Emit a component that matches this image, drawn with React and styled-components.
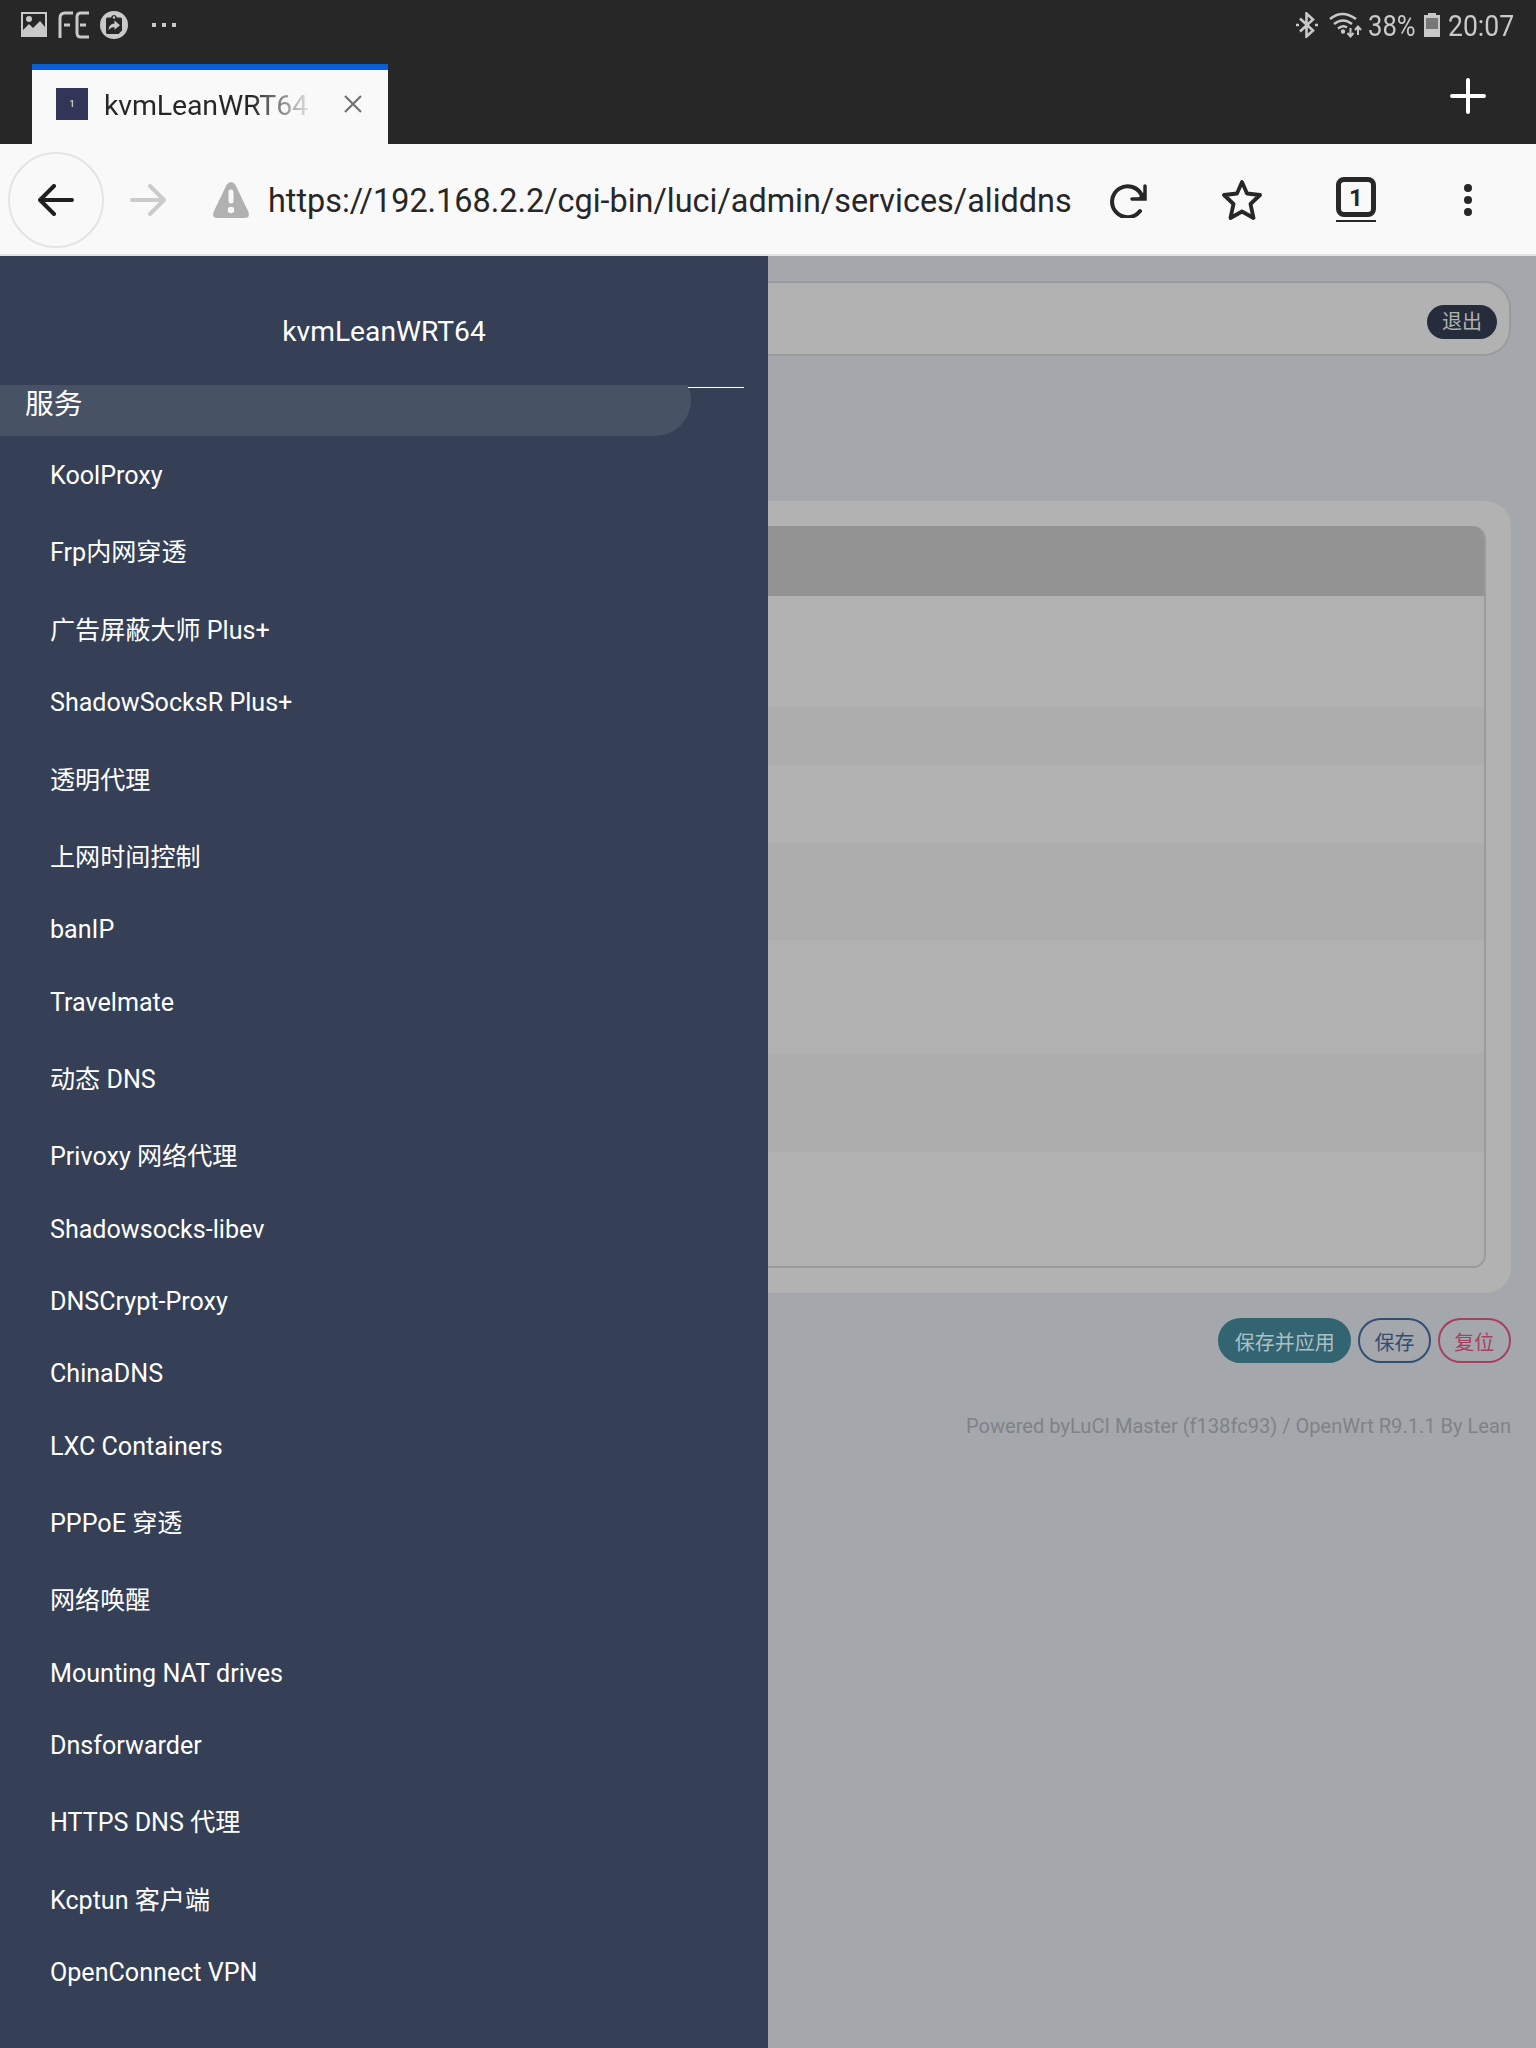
import React from 'react';
import styled, { createGlobalStyle } from 'styled-components';

const GlobalStyle = createGlobalStyle`
  * { box-sizing: border-box; }
  html, body { margin: 0; padding: 0; background: #272727; }
  body { font-family: Roboto, "Noto Sans CJK SC", sans-serif; }
  button { font-family: inherit; padding: 0; margin: 0; border: 0; background: none; }
`;

const Screen = styled.div`
  width: 1536px;
  height: 2048px;
  display: flex;
  flex-direction: column;
  overflow: hidden;
`;

const StatusBar = styled.header`
  height: 50px;
  padding: 0 22px 0 20px;
  display: flex;
  align-items: center;
  justify-content: space-between;
  background: #272727;
  color: #c9c9c9;
`;

const StatusGroup = styled.div`
  display: flex;
  align-items: center;
`;

const Icon = styled.svg`
  display: block;
  flex: none;
  width: ${(p) => p.$w}px;
  height: ${(p) => p.$h}px;
  margin-left: ${(p) => p.$gap || 0}px;
  color: ${(p) => p.$color || 'inherit'};
`;

const StatusText = styled.span`
  flex: none;
  width: ${(p) => p.$w}px;
  margin-left: ${(p) => p.$gap}px;
  padding-top: 1px;
  font-size: 29.5px;
  line-height: 34px;
  white-space: nowrap;
  span {
    display: inline-block;
    transform: scaleX(${(p) => p.$squeeze});
    transform-origin: 0 50%;
  }
`;

const TabStrip = styled.div`
  height: 94px;
  padding: 14px 50px 0 32px;
  display: flex;
  justify-content: space-between;
  background: #272727;
`;

const Tab = styled.div`
  width: 356px;
  height: 80px;
  padding: 0 20px 6px 24px;
  border-top: 6px solid #0a5fd7;
  background: #f9f9fa;
  display: flex;
  align-items: center;
`;

const Favicon = styled.span`
  flex: none;
  width: 32px;
  height: 32px;
  background: #32355a;
  color: #fff;
  font-size: 9px;
  line-height: 32px;
  text-align: center;
`;

const TabTitle = styled.span`
  flex: none;
  width: 216px;
  margin: 3px 0 0 16px;
  white-space: nowrap;
  font-size: 28.5px;
  line-height: 36px;
  letter-spacing: -0.15px;
  background: linear-gradient(90deg, #272727 148px, rgba(39, 39, 39, 0) 212px);
  background-clip: text;
  color: transparent;
`;

const NewTab = styled.button`
  width: 36px;
  height: 64px;
  display: flex;
  align-items: center;
`;

const Toolbar = styled.div`
  height: 112px;
  padding: 2px 64px 0 8px;
  border-bottom: 2px solid #e2e2e2;
  display: flex;
  align-items: center;
  background: #f9f9fa;
  color: #272727;
`;

const BackButton = styled.button`
  width: 96px;
  height: 96px;
  border: 2px solid #e4e4e4;
  border-radius: 50%;
  display: flex;
  align-items: center;
  justify-content: center;
  color: #202020;
`;

const Address = styled.div`
  width: 826px;
  margin: 2px 0 0 19px;
  font-size: 32.4px;
  line-height: 40px;
  white-space: nowrap;
`;

const TabCount = styled.div`
  width: 40px;
  height: 45px;
  margin: 0 0 1px 74px;
  border-bottom: 2px solid #272727;
`;

const TabCountBox = styled.div`
  width: 40px;
  height: 40px;
  border: 5px solid #272727;
  border-radius: 8px;
  text-align: center;
  font-size: 24px;
  font-weight: 700;
  line-height: 32px;
`;

const Viewport = styled.div`
  flex: 1;
  min-height: 0;
  display: flex;
  background: #a4a8ad;
`;

const Drawer = styled.aside`
  width: 768px;
  background: #353f55;
  color: #fff;
  display: flex;
  flex-direction: column;
`;

const Brand = styled.div`
  height: 129px;
  padding-top: 58px;
  text-align: center;
  font-size: 28.2px;
  line-height: 36px;
`;

const MenuScroll = styled.nav`
  flex: 1;
  min-height: 0;
  overflow: hidden;
`;

const SectionRow = styled.div`
  height: 72px;
  margin-top: -21px;
  display: flex;
`;

const Section = styled.div`
  width: 691px;
  height: 72px;
  margin-right: -3px;
  padding-left: 25px;
  border-radius: 0 36px 36px 0;
  background: #475265;
  font-size: 28.8px;
  line-height: 80px;
`;

const Rule = styled.div`
  width: 56px;
  height: 1px;
  margin-top: 23px;
  background: #fff;
`;

const MenuList = styled.ul`
  margin: 0;
  padding: 3.5px 0 0;
  list-style: none;
`;

const MenuItem = styled.li`
  height: ${(p) => (p.$cjk ? 77.4 : 72.3)}px;
  padding-left: 50px;
  display: flex;
  align-items: center;
  font-size: 25.1px;
  white-space: nowrap;
`;

const Page = styled.main`
  flex: 1;
  padding: 25px 25px 0 0;
  display: flex;
  flex-direction: column;
`;

const TopBar = styled.div`
  height: 75px;
  padding: 6px 12px 0 0;
  border: 2px solid #999b9d;
  border-left: 0;
  border-radius: 0 27px 27px 0;
  background: #b2b2b2;
  display: flex;
  align-items: center;
  justify-content: flex-end;
`;

const Logout = styled.button`
  width: 70px;
  height: 34px;
  border-radius: 17px;
  background: #252c3b;
  color: #b2b2b2;
  font-size: 20px;
  line-height: 34px;
`;

const Card = styled.section`
  height: 792px;
  margin-top: 145px;
  padding: 25px 25px 25px 0;
  border-radius: 0 26px 26px 0;
  background: #b2b2b2;
`;

const Table = styled.div`
  height: 742px;
  border: 2px solid #9b9b9b;
  border-width: 0 2px 2px 0;
  border-radius: 0 13px 13px 0;
  overflow: hidden;
  display: flex;
  flex-direction: column;
`;

const TableHead = styled.div`
  flex: none;
  height: 70px;
  margin-right: -2px;
  background: #939393;
`;

const TableRow = styled.div`
  flex: none;
  height: ${(p) => p.$h}px;
  background: ${(p) => (p.$alt ? '#adadad' : '#b1b1b1')};
`;

const Actions = styled.div`
  margin-top: 24.5px;
  display: flex;
  justify-content: flex-end;
  gap: 6.5px;
`;

const Action = styled.button`
  width: ${(p) => (p.$wide ? 133.5 : 73.3)}px;
  height: 45.5px;
  padding-top: 3px;
  border: 2px solid ${(p) => p.$color};
  border-radius: 23px;
  background: ${(p) => (p.$filled ? p.$color : 'transparent')};
  color: ${(p) => (p.$filled ? '#aebfc4' : p.$color)};
  font-size: 20px;
  line-height: 40px;
  white-space: nowrap;
`;

const Footer = styled.footer`
  margin-top: 50px;
  text-align: right;
  color: #7f8286;
  font-size: 20.08px;
  line-height: 26px;
  white-space: nowrap;
`;

const services = [
  'KoolProxy', 'Frp内网穿透', '广告屏蔽大师 Plus+', 'ShadowSocksR Plus+', '透明代理',
  '上网时间控制', 'banIP', 'Travelmate', '动态 DNS', 'Privoxy 网络代理', 'Shadowsocks-libev',
  'DNSCrypt-Proxy', 'ChinaDNS', 'LXC Containers', 'PPPoE 穿透', '网络唤醒',
  'Mounting NAT drives', 'Dnsforwarder', 'HTTPS DNS 代理', 'Kcptun 客户端', 'OpenConnect VPN',
];

const rowHeights = [111, 58, 78, 97, 114, 98, 114];

const hasCjk = (text) => /[\u4e00-\u9fff]/.test(text);

export default function App() {
  return (
    <Screen>
      <GlobalStyle />
      <StatusBar>
        <StatusGroup>
          <Icon $w={28} $h={28} viewBox="0 0 28 28">
            <path fill="currentColor" fillRule="evenodd" d="M1 1h26v25H1zM3 3v16l6-6 4 4 7-7 5 6V3z" />
            <circle cx="9" cy="8" r="3" fill="currentColor" />
          </Icon>
          <Icon $w={32} $h={28} $gap={10} viewBox="0 0 32 28" fill="none" stroke="currentColor" strokeWidth="3">
            <path d="M2 27V7Q2 2 7 2h8M6 14h6M31 2h-8q-4 0-4 4v16q0 4 4 4h8M22 14h6" />
          </Icon>
          <Icon $w={28} $h={28} $gap={10} viewBox="0 0 28 28">
            <circle cx="14" cy="14" r="14" fill="currentColor" />
            <path fill="#272727" d="M7.500 6.500H11Q11.500 4 14 4t3 2.500h3.500Q22 6.500 22 8v11.500L18.500 23h-11Q6 23 6 21.500V8Q6 6.500 7.500 6.500z" />
            <circle cx="14" cy="6.500" r="1.200" fill="currentColor" />
            <path fill="currentColor" d="M8.500 19q.3-6 6-6.500V9.500l5.500 4.700-5.500 4.600V16q-3.500 0-6 3z" />
          </Icon>
          <Icon $w={26} $h={6} $gap={23} viewBox="0 0 26 6" fill="currentColor">
            <rect x="1" y="1" width="4" height="4" /><rect x="11" y="1" width="4" height="4" /><rect x="21" y="1" width="4" height="4" />
          </Icon>
        </StatusGroup>
        <StatusGroup>
          <Icon $w={24} $h={26} viewBox="0 0 24 26" fill="none" stroke="currentColor" strokeWidth="2.6">
            <path d="M5 6.500l13 12-6.500 6V1.500l6.500 6-13 12" />
            <path d="M1 13h3M20 13h3" />
          </Icon>
          <Icon $w={34} $h={26} $gap={9} viewBox="0 0 34 26" fill="none" stroke="currentColor" strokeWidth="2.4">
            <path d="M2 7q12-10 26 0M6 12q9-7 18 0M10 16.500q5-4 9-1" />
            <circle cx="15" cy="19.500" r="1" fill="currentColor" />
            <path strokeWidth="2" d="M22.500 16v8M19.500 21l3 3.500 3-3.500M30 23v-8M27 18l3-3.500 3 3.500" />
          </Icon>
          <StatusText $w={48} $gap={6} $squeeze={0.87}><span>38%</span></StatusText>
          <Icon $w={16} $h={24} $gap={8} viewBox="0 0 16 24">
            <path fill="currentColor" d="M4 0h8v2h4v22H0V2h4z" />
            <rect x="2" y="5" width="12" height="11" fill="#777" />
          </Icon>
          <StatusText $w={66} $gap={8} $squeeze={0.9}><span>20:07</span></StatusText>
        </StatusGroup>
      </StatusBar>

      <TabStrip>
        <Tab>
          <Favicon>1</Favicon>
          <TabTitle>kvmLeanWRT64 -</TabTitle>
          <Icon $w={20} $h={20} $gap={23} $color="#737373" viewBox="0 0 20 20">
            <path d="M2 2l16 16M18 2L2 18" stroke="currentColor" strokeWidth="2.300" />
          </Icon>
        </Tab>
        <NewTab>
          <Icon $w={36} $h={36} viewBox="0 0 36 36">
            <path d="M18 2v32M2 18h32" stroke="#fff" strokeWidth="4" strokeLinecap="round" />
          </Icon>
        </NewTab>
      </TabStrip>

      <Toolbar>
        <BackButton>
          <Icon $w={36} $h={32} viewBox="0 0 36 32" fill="none" stroke="currentColor" strokeWidth="4" strokeLinecap="round" strokeLinejoin="round">
            <path d="M16 2L2 16l14 14M2 16h32" />
          </Icon>
        </BackButton>
        <Icon $w={36} $h={32} $gap={26} $color="#cbcbcb" viewBox="0 0 36 32" fill="none" stroke="currentColor" strokeWidth="4" strokeLinecap="round" strokeLinejoin="round">
          <path d="M20 2l14 14-14 14M34 16H2" />
        </Icon>
        <Icon $w={36} $h={38} $gap={47} $color="#b1b1b1" viewBox="0 0 36 38">
          <path fill="currentColor" d="M13.500 4q4.500-6 9 0L35 30q3 7-3.500 7h-27Q-2 37 1 30z" />
          <path d="M18 11v9" stroke="#f9f9fa" strokeWidth="5" strokeLinecap="round" />
          <circle cx="18" cy="29" r="3.200" fill="#f9f9fa" />
        </Icon>
        <Address>https://192.168.2.2/cgi-bin/luci/admin/services/aliddns</Address>
        <Icon $w={38} $h={36} $gap={15} viewBox="0 0 38 36" fill="none" stroke="currentColor" strokeWidth="4">
          <path d="M31 29a15.500 15.500 0 1 1 2-15" strokeLinecap="round" />
          <path d="M36 4v13H23" strokeWidth="3.500" strokeLinecap="round" />
          <path d="M36 9v8h-8z" fill="currentColor" stroke="none" />
        </Icon>
        <Icon $w={40} $h={40} $gap={75} viewBox="0 0 40 40" fill="none" stroke="currentColor" strokeWidth="3.800" strokeLinejoin="round">
          <path d="M20 2l5 11.500 13 1.500-9.500 9L31.500 38 20 31.500 8.500 38l3-14L2 15l13-1.500z" />
        </Icon>
        <TabCount><TabCountBox>1</TabCountBox></TabCount>
        <Icon $w={8} $h={32} $gap={88} viewBox="0 0 8 32" fill="currentColor">
          <circle cx="4" cy="4" r="4" /><circle cx="4" cy="16" r="4" /><circle cx="4" cy="28" r="4" />
        </Icon>
      </Toolbar>

      <Viewport>
        <Drawer>
          <Brand>kvmLeanWRT64</Brand>
          <MenuScroll>
            <SectionRow>
              <Section>服务</Section>
              <Rule />
            </SectionRow>
            <MenuList>
              {services.map((name) => (
                <MenuItem key={name} $cjk={hasCjk(name)}>{name}</MenuItem>
              ))}
            </MenuList>
          </MenuScroll>
        </Drawer>
        <Page>
          <TopBar><Logout>退出</Logout></TopBar>
          <Card>
            <Table>
              <TableHead />
              {rowHeights.map((h, i) => <TableRow key={i} $h={h} $alt={i % 2 === 1} />)}
            </Table>
          </Card>
          <Actions>
            <Action $wide $filled $color="#326571">保存并应用</Action>
            <Action $color="#304f73">保存</Action>
            <Action $color="#a83f5f">复位</Action>
          </Actions>
          <Footer>Powered byLuCI Master (f138fc93) / OpenWrt R9.1.1 By Lean</Footer>
        </Page>
      </Viewport>
    </Screen>
  );
}
